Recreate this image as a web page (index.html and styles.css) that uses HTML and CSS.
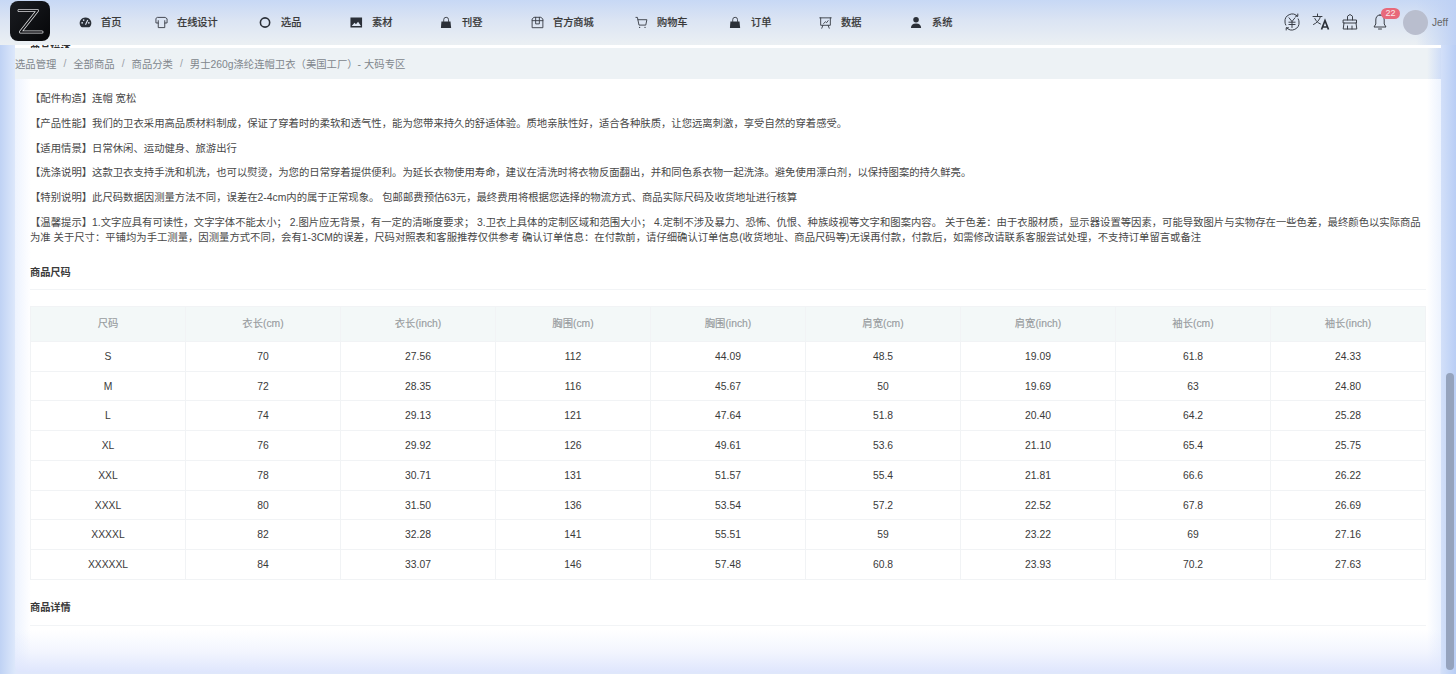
FILE: index.html
```html
<!DOCTYPE html>
<html lang="zh">
<head>
<meta charset="utf-8">
<title>商品详情</title>
<link rel="stylesheet" href="styles.css">
</head>
<body>
<header class="topbar">
  <div class="logo">
    <svg viewBox="0 0 40 40" width="40" height="40"><path class="z-out" d="M9 9.5H27.5L10.5 31H32"/><path class="z-in" d="M9 9.5H27.5L10.5 31H32"/></svg>
  </div>
  <nav class="nav">
    <a class="nav-item"><svg class="ico" viewBox="0 0 14 14"><path class="fill" d="M7 1.500A6.200 6.200 0 0 0 2 11.400c.3.4.7.6 1.200.6h7.600c.5 0 .9-.2 1.200-.6A6.200 6.200 0 0 0 7 1.500z"/><circle class="hole" cx="3.400" cy="7.400" r=".9"/><circle class="hole" cx="5" cy="4.400" r=".9"/><circle class="hole" cx="10.600" cy="7.400" r=".9"/><path class="hole-line" d="M9.400 4.300 7 9.300"/></svg><span>首页</span></a>
    <a class="nav-item"><svg class="ico" viewBox="0 0 14 14"><path class="line" d="M3 1.500H11L13 3V7.500H10.500V12.500H3.500V7.500H1V3zM3.500 5V7.500M10.500 5V7.500"/></svg><span>在线设计</span></a>
    <a class="nav-item"><svg class="ico" viewBox="0 0 14 14"><circle class="ring" cx="6.500" cy="7" r="5"/></svg><span>选品</span></a>
    <a class="nav-item"><svg class="ico" viewBox="0 0 14 14"><path class="fill" fill-rule="evenodd" d="M.5 1.500h12.500v11H.5zM1.800 10.800h10L8.700 6.200 6.400 9 4.900 7.400z"/><circle class="fill" cx="4.200" cy="4.400" r="1"/></svg><span>素材</span></a>
    <a class="nav-item"><svg class="ico" viewBox="0 0 14 14"><path class="fill" d="M1.500 6h9.800l.7 7H1z"/><path class="line" d="M4 6V4a2.600 2.600 0 0 1 5.200 0v2"/></svg><span>刊登</span></a>
    <a class="nav-item"><svg class="ico" viewBox="0 0 14 14"><path class="line" d="M1.200 5V12.600H12.800V3.200L10.600 1.400H3.200L1.200 3.200V5H12.800M5 1.400V8.500H9V1.400"/></svg><span>官方商城</span></a>
    <a class="nav-item"><svg class="ico" viewBox="0 0 14 14"><path class="line" d="M1 1.500H2.600L4.300 9.800H11.600L12.800 4H3.200"/><circle class="fill" cx="5" cy="12.200" r=".7"/><circle class="fill" cx="10.800" cy="12.200" r=".7"/></svg><span>购物车</span></a>
    <a class="nav-item"><svg class="ico" viewBox="0 0 14 14"><path class="fill" d="M1.500 6h9.800l.7 7H1z"/><path class="line" d="M4 6V4a2.600 2.600 0 0 1 5.200 0v2"/></svg><span>订单</span></a>
    <a class="nav-item"><svg class="ico" viewBox="0 0 14 14"><path class="line" d="M.8 2H13.200M1.800 2V10H12.200V2M4.200 10 3 13.200M9.800 10 11 13.200M5 8 7 6.200 8.200 7.200 9.800 5"/></svg><span>数据</span></a>
    <a class="nav-item"><svg class="ico" viewBox="0 0 14 14"><circle class="fill" cx="6.500" cy="4" r="3"/><path class="fill" d="M1 13c0-3 1.800-5 5.500-5S12 10 12 13z"/></svg><span>系统</span></a>
  </nav>
  <div class="tools">
    <svg class="tool" viewBox="0 0 18 18"><path class="line" d="M14.500 3.200A7.300 7.300 0 0 0 2 9c0 1.200.3 2.200.8 3.100M3.500 14.800A7.300 7.300 0 0 0 16 9c0-1.200-.3-2.200-.8-3.100M12.500 3.200h2.300V1M5.500 14.800H3.200V17M6 4.800 9 8.500 12 4.800M5.900 9.200H12.100M5.900 11.500H12.100M9 8.500V14.500"/></svg>
    <svg class="tool" viewBox="0 0 18 18"><path class="line" d="M1 3.500H10M5.500 1V3.500M8.500 3.500C7.500 7 5 10 1.500 11.500M2.800 5.500C4 8 6 10 8.500 11"/><path class="heavy" d="M9.500 16.500 13 7.500 16.500 16.500M10.700 14H15.300"/></svg>
    <svg class="tool" viewBox="0 0 18 18"><path class="line" d="M6.500 7V3.200L9 1.500 11.500 3.200V7M2.500 7H15.500V10H2.500zM3 10 2.200 16H15.800L15 10M6.500 16V13M11 16V13"/></svg>
    <div class="bell">
      <svg class="tool" viewBox="0 0 18 18"><path class="line" d="M9 2C6 2 4.800 4.300 4.800 7V11L3 14H15L13.200 11V7C13.200 4.300 12 2 9 2zM7.500 16H10.500"/></svg>
      <span class="badge">22</span>
    </div>
    <div class="avatar"></div>
    <span class="user">Jeff</span>
  </div>
</header>

<div class="shell">
  <main class="panel">
    <div class="peek"><h3 class="peek-title">商品描述</h3></div>
    <div class="crumbs">
      <span>选品管理</span><i>/</i><span>全部商品</span><i>/</i><span>商品分类</span><i>/</i><span>男士260g涤纶连帽卫衣（美国工厂）- 大码专区</span>
    </div>
    <div class="content">
      <p>【配件构造】连帽 宽松</p>
      <p>【产品性能】我们的卫衣采用高品质材料制成，保证了穿着时的柔软和透气性，能为您带来持久的舒适体验。质地亲肤性好，适合各种肤质，让您远离刺激，享受自然的穿着感受。</p>
      <p>【适用情景】日常休闲、运动健身、旅游出行</p>
      <p>【洗涤说明】这款卫衣支持手洗和机洗，也可以熨烫，为您的日常穿着提供便利。为延长衣物使用寿命，建议在清洗时将衣物反面翻出，并和同色系衣物一起洗涤。避免使用漂白剂，以保持图案的持久鲜亮。</p>
      <p>【特别说明】此尺码数据因测量方法不同，误差在2-4cm内的属于正常现象。 包邮邮费预估63元，最终费用将根据您选择的物流方式、商品实际尺码及收货地址进行核算</p>
      <p>【温馨提示】1.文字应具有可读性，文字字体不能太小； 2.图片应无背景，有一定的清晰度要求； 3.卫衣上具体的定制区域和范围大小； 4.定制不涉及暴力、恐怖、仇恨、种族歧视等文字和图案内容。 关于色差：由于衣服材质，显示器设置等因素，可能导致图片与实物存在一些色差，最终颜色以实际商品为准 关于尺寸：平铺均为手工测量，因测量方式不同，会有1-3CM的误差，尺码对照表和客服推荐仅供参考 确认订单信息：在付款前，请仔细确认订单信息(收货地址、商品尺码等)无误再付款，付款后，如需修改请联系客服尝试处理，不支持订单留言或备注</p>

      <h3 class="section size-title">商品尺码</h3>
      <table class="sizes">
        <thead>
          <tr><th>尺码</th><th>衣长(cm)</th><th>衣长(inch)</th><th>胸围(cm)</th><th>胸围(inch)</th><th>肩宽(cm)</th><th>肩宽(inch)</th><th>袖长(cm)</th><th>袖长(inch)</th></tr>
        </thead>
        <tbody>
          <tr><td>S</td><td>70</td><td>27.56</td><td>112</td><td>44.09</td><td>48.5</td><td>19.09</td><td>61.8</td><td>24.33</td></tr>
          <tr><td>M</td><td>72</td><td>28.35</td><td>116</td><td>45.67</td><td>50</td><td>19.69</td><td>63</td><td>24.80</td></tr>
          <tr><td>L</td><td>74</td><td>29.13</td><td>121</td><td>47.64</td><td>51.8</td><td>20.40</td><td>64.2</td><td>25.28</td></tr>
          <tr><td>XL</td><td>76</td><td>29.92</td><td>126</td><td>49.61</td><td>53.6</td><td>21.10</td><td>65.4</td><td>25.75</td></tr>
          <tr><td>XXL</td><td>78</td><td>30.71</td><td>131</td><td>51.57</td><td>55.4</td><td>21.81</td><td>66.6</td><td>26.22</td></tr>
          <tr><td>XXXL</td><td>80</td><td>31.50</td><td>136</td><td>53.54</td><td>57.2</td><td>22.52</td><td>67.8</td><td>26.69</td></tr>
          <tr><td>XXXXL</td><td>82</td><td>32.28</td><td>141</td><td>55.51</td><td>59</td><td>23.22</td><td>69</td><td>27.16</td></tr>
          <tr><td>XXXXXL</td><td>84</td><td>33.07</td><td>146</td><td>57.48</td><td>60.8</td><td>23.93</td><td>70.2</td><td>27.63</td></tr>
        </tbody>
      </table>
      <h3 class="section detail-title">商品详情</h3>
    </div>
  </main>
  <div class="rail"><div class="thumb"></div></div>
</div>
</body>
</html>
```

FILE: styles.css
```css
* { box-sizing: border-box; }

html, body { height: 100%; }

body {
  margin: 0;
  overflow: hidden;
  display: flex;
  flex-direction: column;
  font-family: "Liberation Sans", "Noto Sans CJK SC", sans-serif;
  color: #333;
  background:
    linear-gradient(to right, #bfd2f4 0, #dde8fb 15px, rgba(221, 232, 251, 0) 16px),
    linear-gradient(to left, #b9cef5 0, #d3e0f9 15px, rgba(211, 224, 249, 0) 16px),
    #dfe7fb;
}

/* top bar */
.topbar {
  height: 45px;
  flex: none;
  display: flex;
  align-items: flex-start;
  padding-left: 10px;
  background:
    linear-gradient(to left, #bed1f5 0, rgba(190, 209, 245, 0) 40px),
    linear-gradient(to bottom, #c7d8f5 0, #dbe4f3 20px, #ebf0f3 45px);
}

.logo {
  width: 40px;
  height: 40px;
  margin-top: 1px;
  border-radius: 8px;
  background: linear-gradient(135deg, #1b1d22, #050608);
  flex: none;
}

.logo svg { display: block; }

.z-out, .z-in {
  fill: none;
  stroke-linejoin: round;
  stroke-linecap: round;
}

.z-out { stroke: #dcdde0; stroke-width: 3; }
.z-in { stroke: #101114; stroke-width: 1.500; }

.nav {
  display: grid;
  grid-template-columns: 76px 104px 91px 90px 91px 104px 94px 90px 91px auto;
  margin-left: 29px;
  height: 42px;
  align-items: center;
}

.nav-item {
  display: flex;
  align-items: center;
  gap: 9px;
  font-size: 10.200px;
  font-weight: 500;
  color: #3a3a3a;
  -webkit-text-stroke: 0.15px #3a3a3a;
}

.ico { width: 13px; height: 13px; flex: none; margin-top: 2px; }

.fill { fill: #2b3038; }
.hole { fill: #e0e7f3; }
.hole-line { fill: none; stroke: #e0e7f3; stroke-width: 1.2; }
.line { fill: none; stroke: #3a3f47; stroke-width: 1; stroke-linejoin: round; stroke-linecap: round; }
.heavy { fill: none; stroke: #2b3038; stroke-width: 1.7; }
.ring { fill: none; stroke: #2b3038; stroke-width: 1.7; }

.tools {
  margin-left: auto;
  height: 44px;
  display: flex;
  align-items: center;
  gap: 11px;
  padding-right: 8px;
}

.tool { width: 18px; height: 18px; display: block; flex: none; }

.bell { position: relative; margin-left: 1px; }

.badge {
  position: absolute;
  left: 10px;
  top: -5px;
  width: 19px;
  height: 11px;
  border-radius: 6px;
  background: #e8697a;
  color: #fbe9ea;
  font-size: 9px;
  line-height: 11px;
  text-align: center;
}

.avatar {
  width: 25px;
  height: 25px;
  border-radius: 50%;
  background: #b9bece;
  margin-left: 3px;
  flex: none;
}

.user {
  font-size: 10px;
  color: #666;
  margin-left: -7px;
}

/* page body */
.shell {
  flex: 1;
  min-height: 0;
  display: flex;
  padding-left: 15px;
}

.panel {
  width: 1426px;
  flex: none;
  height: 627px;
  overflow: hidden;
  border-bottom-left-radius: 6px;
  border-bottom-right-radius: 6px;
  background:
    linear-gradient(to top, #dfe6fd 0, rgba(223, 230, 253, 0.4) 20px, rgba(255, 255, 255, 0) 42px),
    linear-gradient(to right, #edf3fe 0, rgba(237, 243, 254, 0) 16px),
    linear-gradient(to left, #edf3fe 0, rgba(237, 243, 254, 0) 14px),
    #fff;
}

.peek {
  height: 3px;
  overflow: hidden;
  background: #fff;
  padding-left: 15px;
}

.peek-title {
  margin: -3px 0 0;
  font-size: 10.200px;
  line-height: 14px;
  font-weight: 700;
  color: #333;
}

.crumbs {
  height: 31px;
  display: flex;
  align-items: center;
  font-size: 10.350px;
  color: #80868c;
  background:
    linear-gradient(to left, #cfddf7 0, rgba(207, 221, 247, 0) 14px),
    #edf2f5;
}

.crumbs i {
  font-style: normal;
  color: #9aa0a6;
  margin: 0 7px;
}

.content {
  padding: 12px 15px 0;
  font-size: 10.350px;
  line-height: 15px;
  color: #484848;
}

.content p { margin: 0 0 9.800px; }

.section {
  margin: 0;
  font-size: 10.200px;
  font-weight: 700;
  line-height: 15px;
  color: #3a3a3a;
  border-bottom: 1px solid #f2f4f6;
}

.size-title { margin-top: 20px; padding-bottom: 9px; margin-bottom: 16px; }

.detail-title { margin-top: 20px; padding-bottom: 10px; }

.sizes {
  width: 1396px;
  table-layout: fixed;
  border-collapse: collapse;
  text-align: center;
  font-size: 10.350px;
}

.sizes th, .sizes td {
  border: 1px solid #f1f3f5;
  padding: 0;
}

.sizes th {
  height: 35px;
  background: #f3f8f8;
  font-weight: 400;
  color: #989c9f;
  -webkit-text-stroke: 0.15px #989c9f;
}

.sizes td {
  height: 29.750px;
  color: #3a3a3a;
}

/* scrollbar */
.rail {
  flex: 1;
  padding: 328px 2px 0 5px;
}

.thumb {
  height: 297px;
  border-radius: 4px;
  background: #95a3bd;
}
```
